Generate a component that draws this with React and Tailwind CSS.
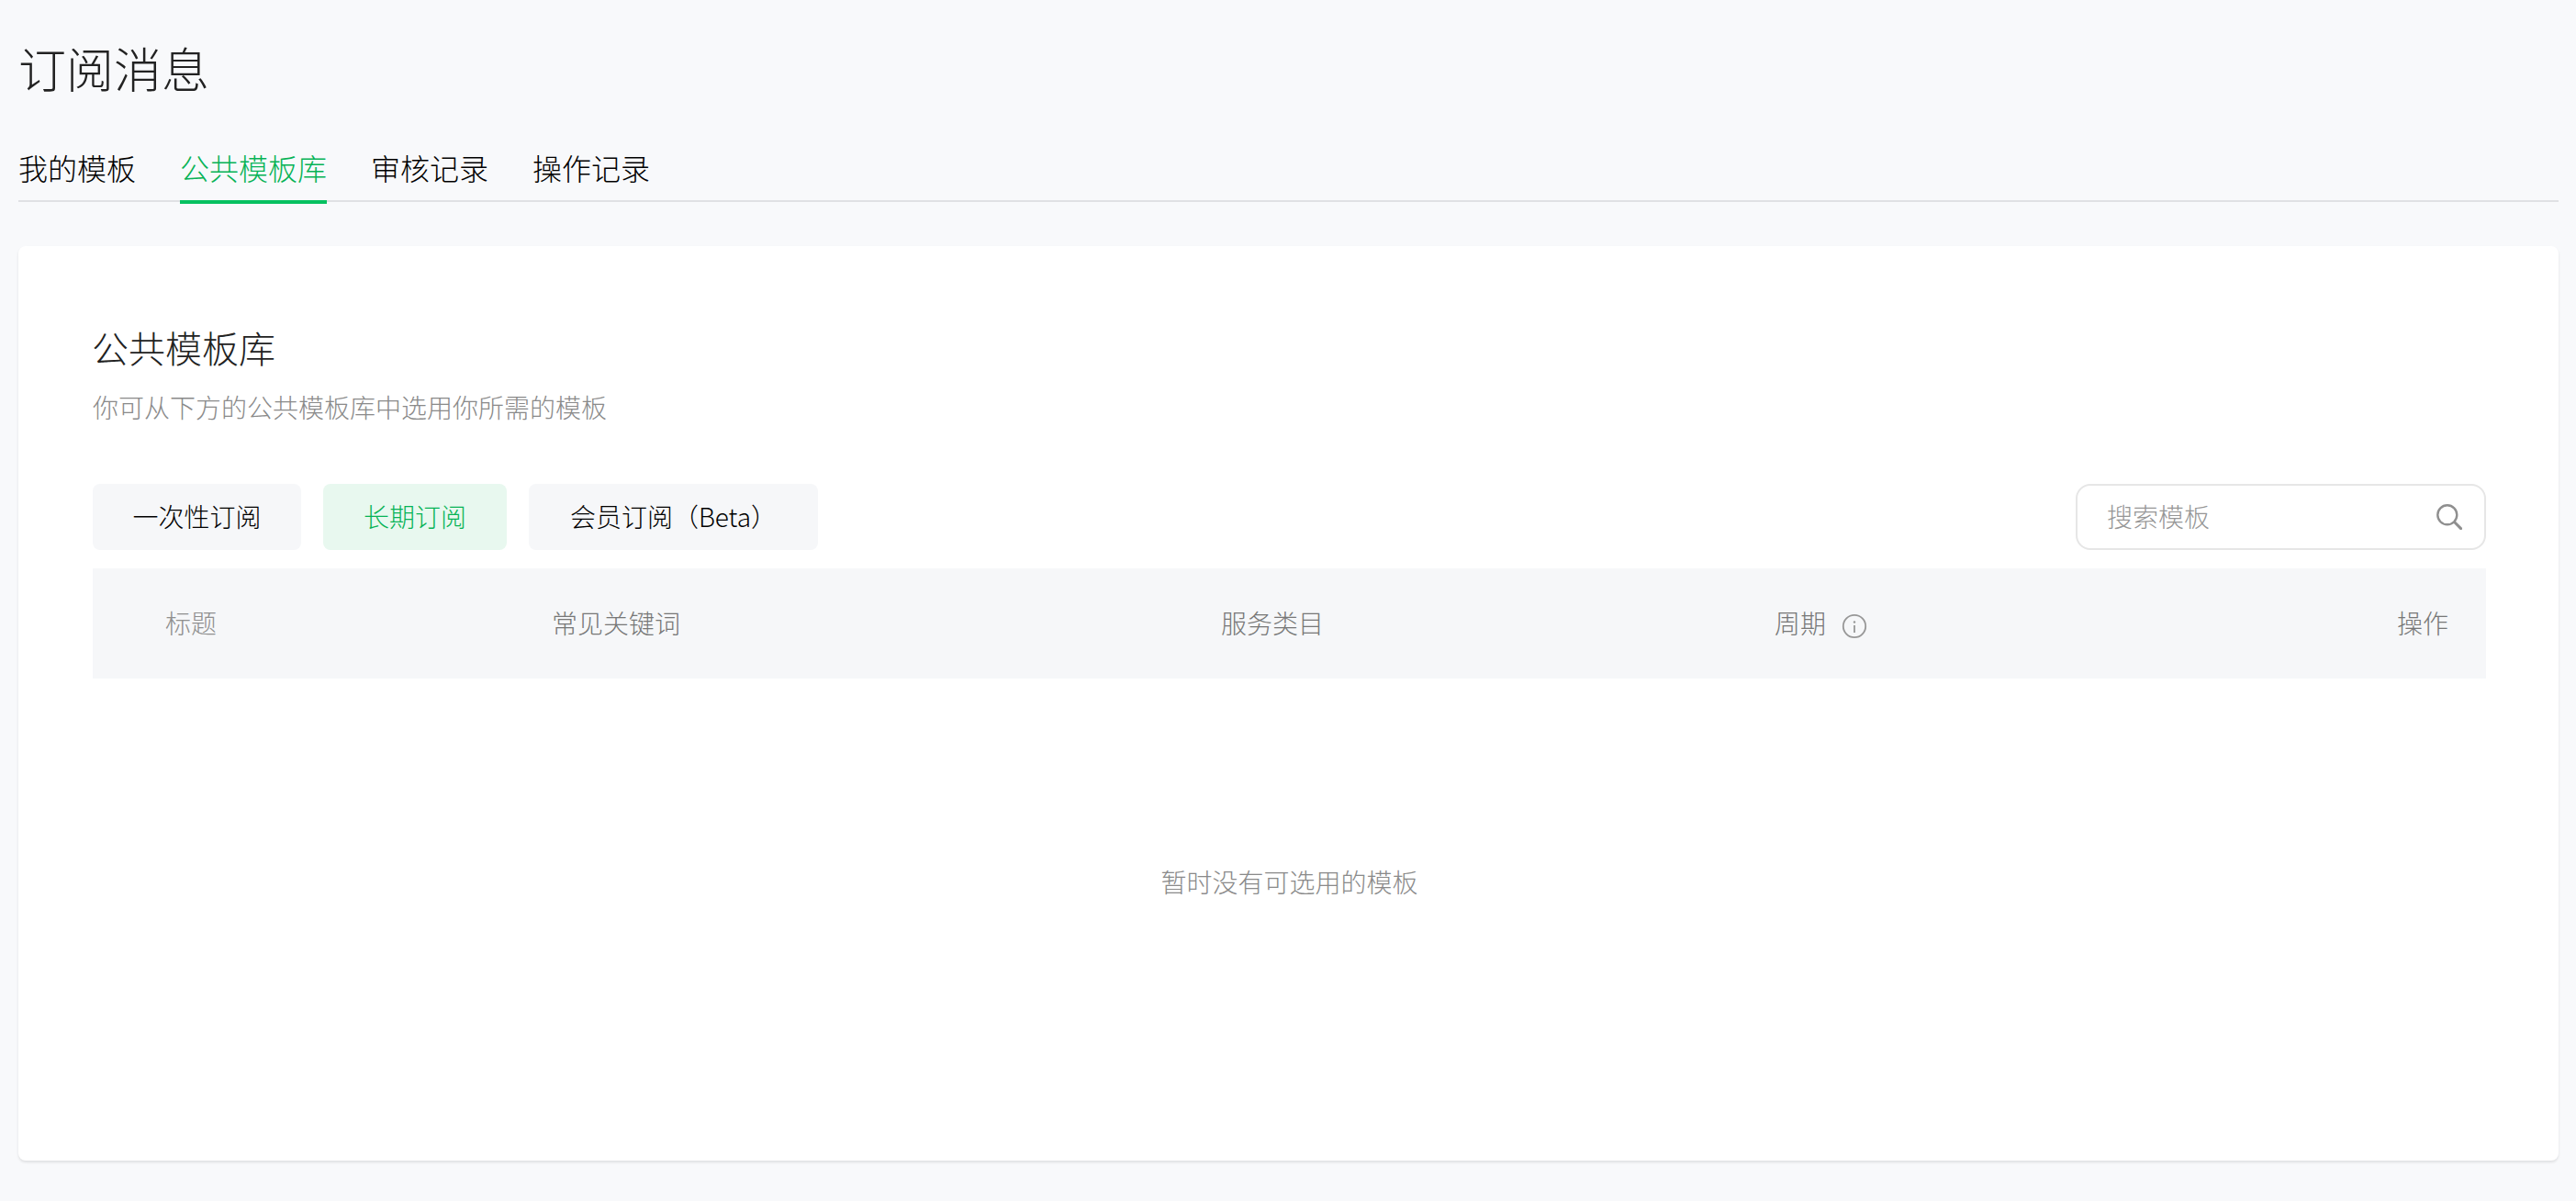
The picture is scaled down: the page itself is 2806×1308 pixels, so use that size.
const tabs = ['我的模板', '公共模板库', '审核记录', '操作记录'];

const Watermark = () => (
  <div className="pointer-events-none absolute left-[110px] top-[16px] grid grid-cols-[repeat(8,314px)_160px] auto-rows-[92px] font-['Liberation_Sans',sans-serif] text-[27px] leading-[28px] text-black/[0.015]">
    {Array.from({ length: 126 }).map((_, i) => (
      <span key={i}>mJY4OJ12</span>
    ))}
  </div>
);

const SearchIcon = () => (
  <svg width="28" height="28" viewBox="0 0 28 28" fill="none" stroke="#8f8f8f" strokeWidth="2.4" strokeLinecap="round">
    <circle cx="11.8" cy="11.8" r="10.5" />
    <path d="M20 20l6.6 6.6" strokeWidth="3" />
  </svg>
);

const InfoIcon = () => (
  <svg className="mt-[7px]" width="28" height="28" viewBox="0 0 28 28" fill="none" stroke="#979797" strokeWidth="1.8">
    <circle cx="14" cy="14" r="12.2" />
    <path d="M14 13v8" />
    <circle cx="14" cy="9.5" r="1.2" fill="#979797" stroke="none" />
  </svg>
);

export default function App() {
  return (
    <div className="relative h-[1308px] overflow-hidden bg-[#f8f9fb] pl-5 pr-[19px] font-['Noto_Sans_CJK_SC',sans-serif] font-light text-[#000000]">
      <h1 className="pt-[44px] text-[52px] leading-[60px] text-[#222222]">订阅消息</h1>

      <div className="mt-[44px] flex h-[72px] gap-[48px] border-b-2 border-[#e0e1e4]">
        {tabs.map((t, i) => (
          <div
            key={t}
            className={i === 1
              ? 'relative -mb-[2px] h-[74px] border-b-4 border-[#07c160] pt-[11px] text-[32px] leading-[46px] text-[#07b356]'
              : 'h-[72px] pt-[11px] text-[32px] leading-[46px]'}
          >
            {t}
          </div>
        ))}
      </div>

      <div className="mt-[48px] h-[996px] rounded-lg bg-white pl-[81px] pr-[79px] pt-[85px] shadow-[0_2px_3px_rgba(0,0,0,0.1)]">
        <h2 className="-ml-[1px] text-[40px] leading-[50px] text-[#222222]">公共模板库</h2>
        <p className="mt-[20px] text-[28px] leading-[40px] text-[#8a8a8a]">你可从下方的公共模板库中选用你所需的模板</p>

        <div className="mt-[64px] flex items-center justify-between">
          <div className="flex gap-6">
            <div className="flex h-[72px] w-[227px] items-center justify-center rounded-lg bg-[#f6f7f9] pb-[2px] text-[28px]">一次性订阅</div>
            <div className="flex h-[72px] w-[200px] items-center justify-center rounded-lg bg-[#e8f8ef] pb-[2px] text-[28px] text-[#07b356]">长期订阅</div>
            <div className="flex h-[72px] w-[315px] items-center justify-center rounded-lg bg-[#f6f7f9] pb-[2px] text-[28px]">会员订阅（Beta）</div>
          </div>
          <div className="flex h-[72px] w-[447px] items-center justify-between rounded-2xl border-2 border-[#e6e6e6] bg-white pl-[32px] pr-[24px]">
            <span className="pb-[2px] text-[28px] text-[#969696]">搜索模板</span>
            <SearchIcon />
          </div>
        </div>

        <div className="mt-5 flex h-[120px] items-center bg-[#f6f7f9] pb-[2px] pr-[41px] text-[28px] text-[#777777]">
          <div className="w-[500px] pl-[79px] text-[#8f8f8f]">标题</div>
          <div className="w-[729px]">常见关键词</div>
          <div className="w-[603px]">服务类目</div>
          <div className="flex items-center gap-[17px]">周期 <InfoIcon /></div>
          <div className="ml-auto">操作</div>
        </div>

        <div className="mt-[199px] text-center text-[28px] leading-[44px] text-[#8a8a8a]">暂时没有可选用的模板</div>
      </div>

      <Watermark />
    </div>
  );
}
